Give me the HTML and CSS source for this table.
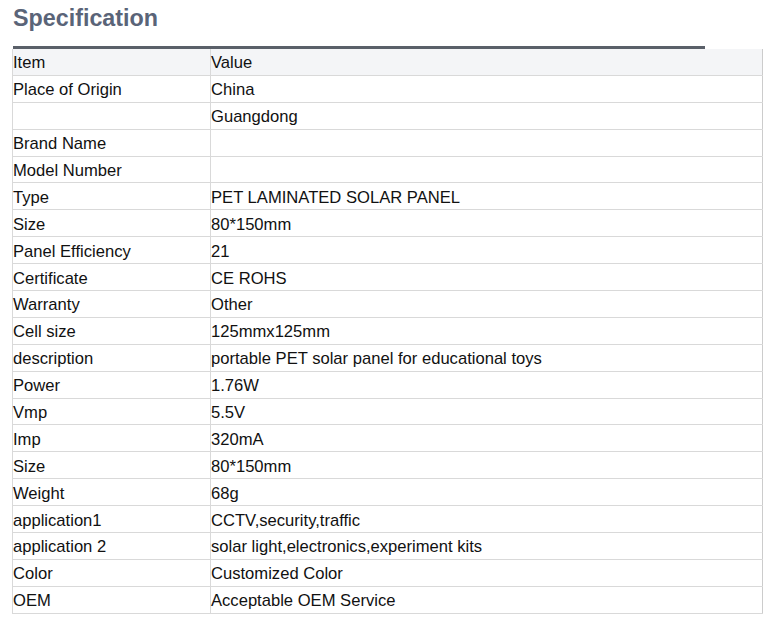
FILE: index.html
```html
<!DOCTYPE html>
<html>
<head>
<meta charset="utf-8">
<link rel="stylesheet" href="styles.css">
</head>
<body>
<div class="page">
  <h2 class="title">Specification</h2>
  <div class="rule"></div>
  <table class="spec">
    <tr class="head"><td class="k">Item</td><td>Value</td></tr>
    <tr><td class="k">Place of Origin</td><td>China</td></tr>
    <tr><td class="k"></td><td>Guangdong</td></tr>
    <tr><td class="k">Brand Name</td><td></td></tr>
    <tr><td class="k">Model Number</td><td></td></tr>
    <tr><td class="k">Type</td><td>PET LAMINATED SOLAR PANEL</td></tr>
    <tr><td class="k">Size</td><td>80*150mm</td></tr>
    <tr><td class="k">Panel Efficiency</td><td>21</td></tr>
    <tr><td class="k">Certificate</td><td>CE ROHS</td></tr>
    <tr><td class="k">Warranty</td><td>Other</td></tr>
    <tr><td class="k">Cell size</td><td>125mmx125mm</td></tr>
    <tr><td class="k">description</td><td>portable PET solar panel for educational toys</td></tr>
    <tr><td class="k">Power</td><td>1.76W</td></tr>
    <tr><td class="k">Vmp</td><td>5.5V</td></tr>
    <tr><td class="k">Imp</td><td>320mA</td></tr>
    <tr><td class="k">Size</td><td>80*150mm</td></tr>
    <tr><td class="k">Weight</td><td>68g</td></tr>
    <tr><td class="k">application1</td><td>CCTV,security,traffic</td></tr>
    <tr><td class="k">application 2</td><td>solar light,electronics,experiment kits</td></tr>
    <tr><td class="k">Color</td><td>Customized Color</td></tr>
    <tr><td class="k">OEM</td><td>Acceptable OEM Service</td></tr>
  </table>
</div>
</body>
</html>
```
FILE: styles.css
```css
html, body {
  margin: 0;
  padding: 0;
  background: #ffffff;
}
.page {
  padding: 5px 10px 0 12px;
  font-family: "Liberation Sans", Arial, sans-serif;
}
.title {
  margin: 0 0 0 1px;
  font-size: 23.3px;
  line-height: 27px;
  font-weight: bold;
  color: #5a6478;
}
.rule {
  margin: 14px 0 0 1px;
  width: 692px;
  height: 3px;
  background: #5a6069;
}
.spec {
  width: 751px;
  border-collapse: collapse;
  font-size: 16.6px;
  color: #111;
  margin-top: 0;
}
.spec td {
  height: 22.9px;
  padding: 3px 0 0 0;
  border: 1px solid #d9d9d9;
  vertical-align: middle;
  line-height: 18px;
}
.spec td.k {
  width: 197px;
}
.spec tr td:last-child {
  border-right-color: #cccccc;
}
.spec tr.head td {
  background: #f4f5f7;
  border-top: none;
}
```
